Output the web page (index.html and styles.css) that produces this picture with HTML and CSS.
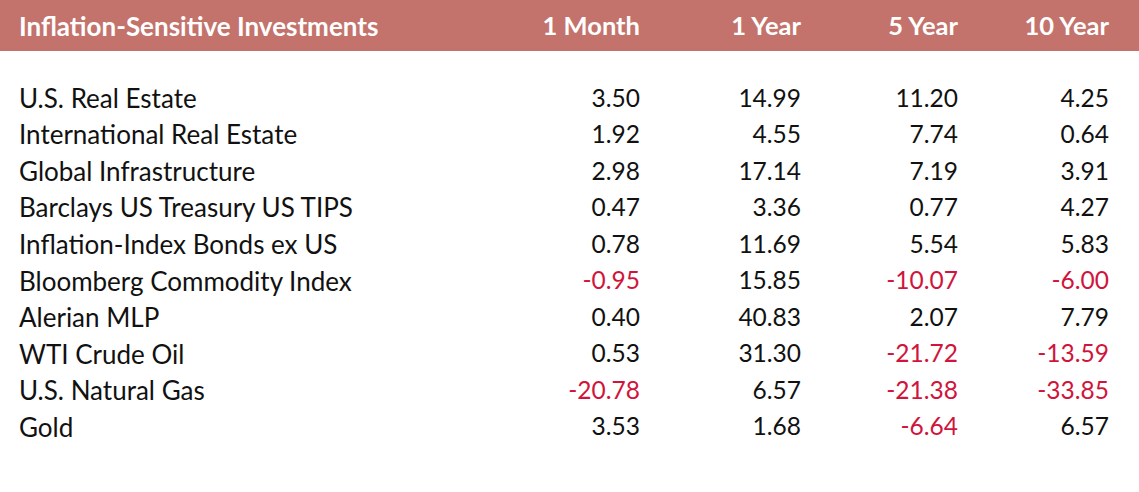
FILE: index.html
```html
<!DOCTYPE html>
<html>
<head>
<meta charset="utf-8">
<link rel="stylesheet" href="styles.css">
</head>
<body>
<div class="table">
  <div class="row head">
    <div class="label">Inflation-Sensitive Investments</div>
    <div class="num">1 Month</div>
    <div class="num">1 Year</div>
    <div class="num">5 Year</div>
    <div class="num">10 Year</div>
  </div>
  <div class="body">
    <div class="row"><div class="label">U.S. Real Estate</div><div class="num">3.50</div><div class="num">14.99</div><div class="num">11.20</div><div class="num">4.25</div></div>
    <div class="row"><div class="label">International Real Estate</div><div class="num">1.92</div><div class="num">4.55</div><div class="num">7.74</div><div class="num">0.64</div></div>
    <div class="row"><div class="label">Global Infrastructure</div><div class="num">2.98</div><div class="num">17.14</div><div class="num">7.19</div><div class="num">3.91</div></div>
    <div class="row"><div class="label">Barclays US Treasury US TIPS</div><div class="num">0.47</div><div class="num">3.36</div><div class="num">0.77</div><div class="num">4.27</div></div>
    <div class="row"><div class="label">Inflation-Index Bonds ex US</div><div class="num">0.78</div><div class="num">11.69</div><div class="num">5.54</div><div class="num">5.83</div></div>
    <div class="row"><div class="label">Bloomberg Commodity Index</div><div class="num neg">-0.95</div><div class="num">15.85</div><div class="num neg">-10.07</div><div class="num neg">-6.00</div></div>
    <div class="row"><div class="label">Alerian MLP</div><div class="num">0.40</div><div class="num">40.83</div><div class="num">2.07</div><div class="num">7.79</div></div>
    <div class="row"><div class="label">WTI Crude Oil</div><div class="num">0.53</div><div class="num">31.30</div><div class="num neg">-21.72</div><div class="num neg">-13.59</div></div>
    <div class="row"><div class="label">U.S. Natural Gas</div><div class="num neg">-20.78</div><div class="num">6.57</div><div class="num neg">-21.38</div><div class="num neg">-33.85</div></div>
    <div class="row"><div class="label">Gold</div><div class="num">3.53</div><div class="num">1.68</div><div class="num neg">-6.64</div><div class="num">6.57</div></div>
  </div>
</div>
</body>
</html>
```
FILE: styles.css
```css
html, body {
  margin: 0;
  padding: 0;
  background: #ffffff;
}
.table {
  width: 1139px;
  font-family: Lato, "Liberation Sans", sans-serif;
  font-size: 25.5px;
  color: #111111;
}
.row {
  display: grid;
  grid-template-columns: 461px 160px 161px 157px 151px;
  padding: 0 30px 0 19px;
  height: 36.55px;
  align-items: center;
  line-height: 1;
}
.head {
  background: #c3736b;
  color: #ffffff;
  font-weight: 700;
  height: 51px;
}
.label {
  font-size: 26px;
}
.body {
  padding-top: 28.5px;
}
.num {
  text-align: right;
}
.body .num {
  font-size: 24.5px;
}
.neg {
  color: #d0143c;
}
```
